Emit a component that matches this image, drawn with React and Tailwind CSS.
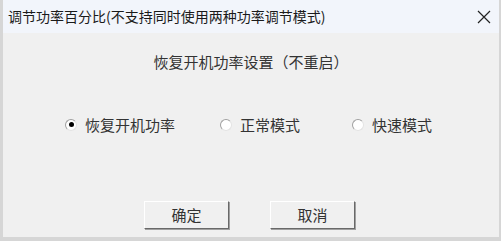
import React from "react";

function Radio({ checked }) {
  return (
    <span className="relative inline-flex h-[12px] w-[12px] items-center justify-center rounded-full border border-t-[#a0a0a0] border-l-[#a0a0a0] border-r-[#e3e3e3] border-b-[#e3e3e3] bg-white">
      {checked && <span className="h-[5px] w-[5px] rounded-full bg-black" />}
    </span>
  );
}

function Button({ children }) {
  return (
    <button className="h-[28px] w-[85px] border border-t-white border-l-white border-r-[#696969] border-b-[#696969] bg-[#f0f0f0] text-[15px] text-[#333] shadow-[1px_1px_0_#a0a0a0]">
      {children}
    </button>
  );
}

export default function App() {
  const options = [
    { label: "恢复开机功率", checked: true, w: "w-[155px]" },
    { label: "正常模式", checked: false, w: "w-[132px]" },
    { label: "快速模式", checked: false, w: "w-[90px]" },
  ];

  return (
    <div
      className="flex h-[241px] w-[501px] flex-col border-l-[3px] border-r-[2px] border-b-[4px] border-[#d6d6d6] bg-[#f0f0f0]"
      style={{ fontFamily: '"Noto Sans CJK SC", sans-serif' }}
    >
      {/* title bar */}
      <div className="flex h-[33px] items-center justify-between bg-[#f2f5fb] pl-[5px] pr-[8px]">
        <span className="text-[14px] text-[#1a1a1a]">调节功率百分比(不支持同时使用两种功率调节模式)</span>
        <svg width="14" height="14" viewBox="0 0 14 14">
          <path d="M1 1L13 13M13 1L1 13" stroke="#222" strokeWidth="1.2" />
        </svg>
      </div>

      <div className="flex flex-1 flex-col items-center">
        <div className="mt-[18px] text-[15px] text-[#333]">恢复开机功率设置（不重启）</div>

        <div className="mt-[40px] flex w-full pl-[62px]">
          {options.map((o) => (
            <div key={o.label} className={`flex items-center gap-[8px] ${o.w}`}>
              <Radio checked={o.checked} />
              <span className="text-[15px] text-[#333]">{o.label}</span>
            </div>
          ))}
        </div>

        <div className="mt-[65px] flex gap-[41px] pr-[3px]">
          <Button>确定</Button>
          <Button>取消</Button>
        </div>
      </div>
    </div>
  );
}
